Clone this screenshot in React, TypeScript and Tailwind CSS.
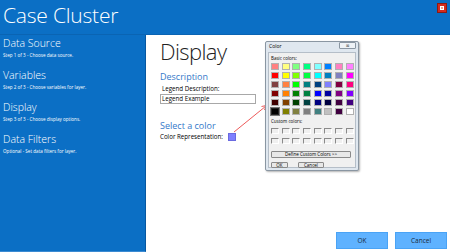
import React from "react";

const basic = [
  ["#FF8080", "#FFFF80", "#80FF80", "#00FF80", "#80FFFF", "#0080FF", "#FF80C0", "#FF80FF"],
  ["#FF0000", "#FFFF00", "#80FF00", "#00FF40", "#00FFFF", "#0080C0", "#8080C0", "#FF00FF"],
  ["#804040", "#FF8040", "#00FF00", "#008080", "#004080", "#8080FF", "#800040", "#FF0080"],
  ["#800000", "#FF8000", "#008000", "#008040", "#0000FF", "#0000A0", "#800080", "#8000FF"],
  ["#400000", "#804000", "#004000", "#004040", "#000080", "#000040", "#400040", "#400080"],
  ["#000000", "#808000", "#808040", "#808080", "#408080", "#C0C0C0", "#400040", "#FFFFFF"],
];

const Step = ({ title, sub }: { title: string; sub: string }) => (
  <div className="flex flex-col">
    <div className="text-[10.5px] leading-[13px] text-white font-light">{title}</div>
    <div className="text-[4.6px] leading-[7px] text-white mt-[2px]">{sub}</div>
  </div>
);

export default function App() {
  return (
    <div
      className="w-[450px] h-[252px] bg-white flex flex-col overflow-hidden relative"
      style={{ fontFamily: '"Open Sans", "Noto Sans", sans-serif' }}
    >
      <div className="h-[35px] bg-[#0b6fc5] flex items-start justify-between pl-[3px] pr-[3px] border-b border-[#0a64b3]">
        <div className="text-[21px] leading-[30px] text-white font-light tracking-[-0.2px]">Case Cluster</div>
        <div className="mt-[3px] w-[10px] h-[10px] bg-[#d42a1e] border border-[#8e1a12] flex items-center justify-center">
          <div className="w-[4px] h-[4px] border border-white bg-[#f0a090]" />
        </div>
      </div>
      <div className="flex flex-1">
        <div className="w-[146px] bg-[#0b6fc5] border-r border-[#0757a0] flex flex-col pl-[3px] pt-[2px] gap-[10px] border-b border-b-[#3c8bd2]">
          <Step title="Data Source" sub="Step 1 of 3 - Choose data source." />
          <Step title="Variables" sub="Step 2 of 3 - Choose variables for layer." />
          <Step title="Display" sub="Step 3 of 3 - Choose display options." />
          <Step title="Data Filters" sub="Optional - Set data filters for layer." />
        </div>
        <div className="flex-1 relative flex flex-col">
          <div className="pl-[14px] pt-[2px] flex flex-col">
            <div className="text-[22px] leading-[28px] font-light text-[#222] tracking-[-0.6px]">Display</div>
            <div className="text-[9px] leading-[11px] text-[#3579c9] mt-[6px]">Description</div>
            <div className="text-[6.2px] leading-[8px] text-black mt-[3px] pl-[2px]">Legend Description:</div>
            <div className="w-[96px] h-[10px] border border-[#a8a8a8] text-[6.2px] leading-[8px] pl-[1px] mt-[1px]">Legend Example</div>
            <div className="text-[9px] leading-[11px] text-[#3579c9] mt-[16px]">Select a color</div>
            <div className="flex items-start mt-[2px]">
              <div className="text-[6.2px] leading-[8px] text-black">Color Representation:</div>
              <div className="w-[8px] h-[8px] bg-[#8080ff] border border-[#6a6ae0] ml-[5px]" />
            </div>
          </div>
          <div className="flex-1" />
          <div className="flex justify-end gap-[7px] pr-[3px] pb-[3px]">
            <div className="w-[52px] h-[17px] bg-[#5fb2ff] border border-[#4aa3f5] flex items-center justify-center text-[6.5px] text-[#1a2a3a]">OK</div>
            <div className="w-[52px] h-[17px] bg-[#5fb2ff] border border-[#4aa3f5] flex items-center justify-center text-[6.5px] text-[#1a2a3a]">Cancel</div>
          </div>

          {/* arrow */}
          <svg className="absolute left-0 top-0" width="304" height="218" viewBox="0 0 304 218">
            <line x1="88" y1="97" x2="120" y2="71" stroke="#e83030" strokeWidth="0.8" />
            <path d="M120.5 70.5 L115.5 71.5 M120.5 70.5 L118.5 75" stroke="#e83030" strokeWidth="0.8" fill="none" />
          </svg>

          {/* color dialog */}
          <div className="absolute left-[119px] top-[6px] w-[94px] h-[130px] bg-[#dfe7ef] border border-[#8a96a2] rounded-[2px] px-[2px] flex flex-col shadow-[1px_1px_2px_rgba(0,0,0,0.3)]">
            <div className="flex justify-between items-start h-[9px]">
              <div className="text-[5px] leading-[9px] text-black pl-[1px]">Color</div>
              <div className="w-[17px] h-[7px] border border-[#8a96a2] rounded-[1px] bg-[#eef2f6] flex items-center justify-center text-[4px] leading-[4px] text-[#555]">⊠</div>
            </div>
            <div className="h-[116px] bg-[#f0f0f0] border border-[#b5bec8] mt-[1px] px-[2px] pt-[2px] flex flex-col">
              <div className="text-[4.5px] leading-[6px] text-black">Basic colors:</div>
              <div className="grid grid-cols-[repeat(8,8px)] gap-x-[2.7px] gap-y-[2px] mt-[2px]">
                {basic.flat().map((c, i) => (
                  <div
                    key={i}
                    className={i === 40 ? "w-[8px] h-[7px] border border-[#222] outline outline-[0.5px] outline-[#777]" : "w-[8px] h-[7px] border border-[#b0b0b0]"}
                    style={{ backgroundColor: c }}
                  />
                ))}
              </div>
              <div className="text-[4.5px] leading-[6px] text-black mt-[3px]">Custom colors:</div>
              <div className="grid grid-cols-[repeat(8,8px)] gap-x-[2.7px] gap-y-[4px] mt-[4px]">
                {Array.from({ length: 16 }).map((_, i) => (
                  <div key={i} className="w-[8px] h-[6px] border-t border-l border-[#8a8a8a] border-b border-r border-b-white border-r-white bg-[#f0f0f0]" />
                ))}
              </div>
              <div className="mt-[7px] w-[80px] h-[7px] border border-[#8a8a8a] rounded-[1px] bg-[#e8e8e8] flex items-center justify-center text-[4.5px] leading-[5px] text-black">Define Custom Colors &gt;&gt;</div>
              <div className="flex gap-[10px] mt-[4px]">
                <div className="w-[17px] h-[6px] border border-[#8a8a8a] rounded-[1px] bg-[#e8e8e8] flex items-center justify-center text-[4.5px] leading-[5px]">OK</div>
                <div className="w-[26px] h-[6px] border border-[#8a8a8a] rounded-[1px] bg-[#e8e8e8] flex items-center justify-center text-[4.5px] leading-[5px]">Cancel</div>
              </div>
            </div>
          </div>
        </div>
      </div>
    </div>
  );
}
